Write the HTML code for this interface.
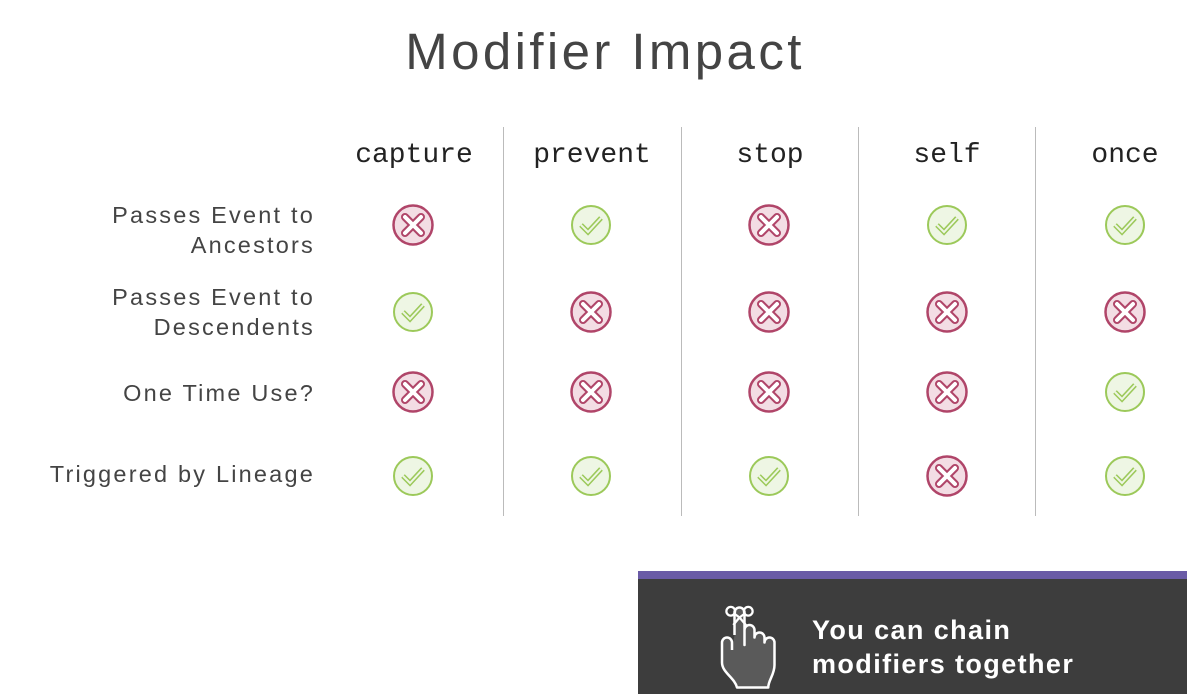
<!DOCTYPE html>
<html><head><style>
body{margin:0;width:1195px;height:694px;background:#fff;position:relative;overflow:hidden;font-family:"Liberation Sans",sans-serif}
.t{position:absolute;left:0;width:1210px;top:22px;text-align:center;font-size:51px;color:#444;font-weight:300;letter-spacing:3.4px}
.h{position:absolute;top:140px;font-family:"Liberation Mono",monospace;font-size:28px;color:#222;width:178px;text-align:center}
.l{position:absolute;right:880px;text-align:right;font-size:23.5px;color:#444;line-height:30px;letter-spacing:2.2px}
.d{position:absolute;top:127px;height:389px;width:1px;background:#bbb}
.i{position:absolute;width:44px;height:44px}
.box{position:absolute;left:638px;top:571px;width:549px;height:123px;background:#3d3d3d;border-top:8px solid #6a5ba6;box-sizing:border-box}
.bt{position:absolute;left:812px;top:613px;color:#fff;font-weight:bold;font-size:27px;line-height:34px;letter-spacing:1.4px}
</style></head><body>
<div class="t">Modifier Impact</div>
<div class="h" style="left:325px">capture</div>
<div class="h" style="left:503px">prevent</div>
<div class="h" style="left:681px">stop</div>
<div class="h" style="left:858px">self</div>
<div class="h" style="left:1036px">once</div>
<div class="d" style="left:503px"></div><div class="d" style="left:681px"></div><div class="d" style="left:858px"></div><div class="d" style="left:1035px"></div>
<div class="l" style="top:200px">Passes Event to<br>Ancestors</div>
<div class="l" style="top:282px">Passes Event to<br>Descendents</div>
<div class="l" style="top:378px">One Time Use?</div>
<div class="l" style="top:459px">Triggered by Lineage</div>
<svg width="0" height="0" style="position:absolute"><defs>
<g id="x"><circle cx="22" cy="22" r="19.5" fill="#f3dde4" stroke="#b04569" stroke-width="2.5"/><path d="M14 14L30 30M30 14L14 30" stroke="#b04569" stroke-width="8" stroke-linecap="round"/><path d="M14 14L30 30M30 14L14 30" stroke="#fff" stroke-width="4" stroke-linecap="round"/></g>
<g id="c"><circle cx="22" cy="22" r="19" fill="#eef6e4" stroke="#9cc95a" stroke-width="2"/><path d="M12 22L19 29L32 15" fill="none" stroke="#9cc95a" stroke-width="5" stroke-linejoin="miter"/><path d="M12 22L19 29L32 15" fill="none" stroke="#eef6e4" stroke-width="2"/></g>
</defs></svg>
<svg class="i" style="left:391px;top:203px"><use href="#x"/></svg>
<svg class="i" style="left:569px;top:203px"><use href="#c"/></svg>
<svg class="i" style="left:747px;top:203px"><use href="#x"/></svg>
<svg class="i" style="left:925px;top:203px"><use href="#c"/></svg>
<svg class="i" style="left:1103px;top:203px"><use href="#c"/></svg>
<svg class="i" style="left:391px;top:290px"><use href="#c"/></svg>
<svg class="i" style="left:569px;top:290px"><use href="#x"/></svg>
<svg class="i" style="left:747px;top:290px"><use href="#x"/></svg>
<svg class="i" style="left:925px;top:290px"><use href="#x"/></svg>
<svg class="i" style="left:1103px;top:290px"><use href="#x"/></svg>
<svg class="i" style="left:391px;top:370px"><use href="#x"/></svg>
<svg class="i" style="left:569px;top:370px"><use href="#x"/></svg>
<svg class="i" style="left:747px;top:370px"><use href="#x"/></svg>
<svg class="i" style="left:925px;top:370px"><use href="#x"/></svg>
<svg class="i" style="left:1103px;top:370px"><use href="#c"/></svg>
<svg class="i" style="left:391px;top:454px"><use href="#c"/></svg>
<svg class="i" style="left:569px;top:454px"><use href="#c"/></svg>
<svg class="i" style="left:747px;top:454px"><use href="#c"/></svg>
<svg class="i" style="left:925px;top:454px"><use href="#x"/></svg>
<svg class="i" style="left:1103px;top:454px"><use href="#c"/></svg>
<div class="box"></div>
<svg style="position:absolute;left:712px;top:600px" width="80" height="90" viewBox="0 0 64 72">
<path d="M18 28V10a4 4 0 0 1 8 0v26V24a4 4 0 0 1 8 0v6a4 4 0 0 1 8 0v4a4 4 0 0 1 8 0v18c0 8-5 12-5 18H20C18 62 8 58 8 50V34a4 4 0 0 1 8 0v6" fill="#5a5a5a" stroke="#fff" stroke-width="2" stroke-linejoin="round"/>
<circle cx="15" cy="9" r="3.5" fill="none" stroke="#fff" stroke-width="1.8"/><circle cx="29" cy="9" r="3.5" fill="none" stroke="#fff" stroke-width="1.8"/>
<path d="M18 11L22 14L26 11M22 14L17 20M22 14L28 21" stroke="#fff" stroke-width="1.8" fill="none"/>
</svg>
<div class="bt">You can chain<br>modifiers together</div>
</body></html>
